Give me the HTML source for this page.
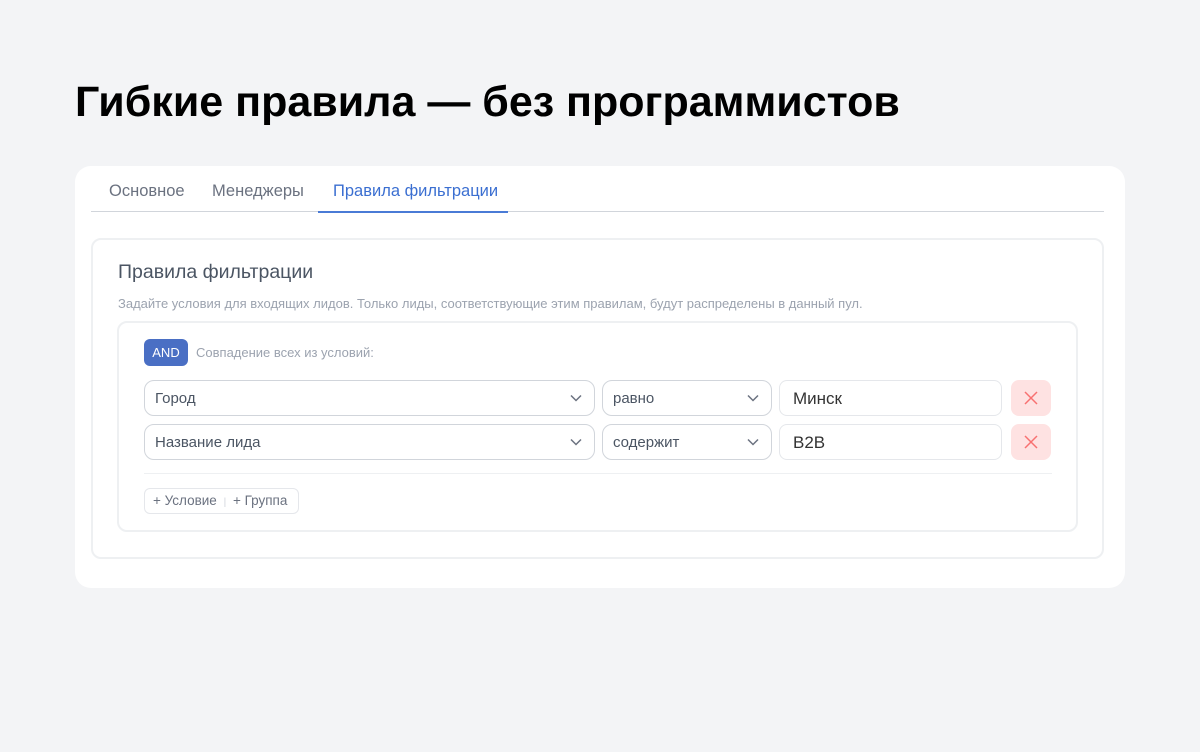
<!DOCTYPE html>
<html><head><meta charset="utf-8"><style>
*{box-sizing:border-box;margin:0;padding:0}
body{width:1200px;height:752px;background:#f3f4f6;font-family:"Liberation Sans",sans-serif;position:relative;overflow:hidden}
.abs{position:absolute}
h1{position:absolute;left:75px;top:78px;font-size:43px;font-weight:700;color:#000}
.card{left:75px;top:166px;width:1050px;height:422px;background:#fff;border-radius:16px}
.tab{top:182px;font-size:16.5px;color:#6b7280}
.sel{height:36px;border:1px solid #d1d5db;border-radius:10px;background:#fff;font-size:15px;color:#4b5563;padding:0 10px;line-height:36px}
.sel svg{position:absolute;right:12px;top:13px}
.inp{height:36px;border:1px solid #e5e7eb;border-radius:8px;background:#fff;font-size:17px;color:#333;padding:0 13px;line-height:35px}
.x{width:40px;height:36px;background:#fee2e2;border-radius:8px}
.x svg{position:absolute;left:13px;top:11px}
</style></head><body>
<h1>Гибкие правила — без программистов</h1>
<div class="abs card"></div>
<div class="abs tab" style="left:109px">Основное</div>
<div class="abs tab" style="left:212px">Менеджеры</div>
<div class="abs tab" style="left:333px;color:#3b6fd1">Правила фильтрации</div>
<div class="abs" style="left:91px;top:211px;width:1013px;height:1px;background:#d1d5db"></div>
<div class="abs" style="left:318px;top:211px;width:190px;height:2px;background:#4a7bd6"></div>
<div class="abs" style="left:91px;top:238px;width:1013px;height:321px;border:2px solid #eef0f2;border-radius:10px"></div>
<div class="abs" style="left:118px;top:261px;font-size:19.5px;color:#4b5563">Правила фильтрации</div>
<div class="abs" style="left:118px;top:296px;font-size:13px;color:#9ca3af">Задайте условия для входящих лидов. Только лиды, соответствующие этим правилам, будут распределены в данный пул.</div>
<div class="abs" style="left:117px;top:321px;width:961px;height:211px;border:2px solid #eef0f2;border-radius:10px"></div>
<div class="abs" style="left:144px;top:339px;width:44px;height:27px;background:#4a6fc4;border-radius:6px;color:#fff;font-size:13px;text-align:center;line-height:27px">AND</div>
<div class="abs" style="left:196px;top:345px;font-size:13px;color:#9ca3af">Совпадение всех из условий:</div>

<div class="abs sel" style="left:144px;top:380px;width:451px">Город<svg width="12" height="8" viewBox="0 0 12 8"><path d="M1 1.5l5 5 5-5" fill="none" stroke="#6b7280" stroke-width="1.5"/></svg></div>
<div class="abs sel" style="left:602px;top:380px;width:170px">равно<svg width="12" height="8" viewBox="0 0 12 8"><path d="M1 1.5l5 5 5-5" fill="none" stroke="#6b7280" stroke-width="1.5"/></svg></div>
<div class="abs inp" style="left:779px;top:380px;width:223px">Минск</div>
<div class="abs x" style="left:1011px;top:380px"><svg width="14" height="14" viewBox="0 0 14 14"><path d="M1 1l12 12M13 1L1 13" stroke="#f87171" stroke-width="1.5"/></svg></div>

<div class="abs sel" style="left:144px;top:424px;width:451px">Название лида<svg width="12" height="8" viewBox="0 0 12 8"><path d="M1 1.5l5 5 5-5" fill="none" stroke="#6b7280" stroke-width="1.5"/></svg></div>
<div class="abs sel" style="left:602px;top:424px;width:170px">содержит<svg width="12" height="8" viewBox="0 0 12 8"><path d="M1 1.5l5 5 5-5" fill="none" stroke="#6b7280" stroke-width="1.5"/></svg></div>
<div class="abs inp" style="left:779px;top:424px;width:223px">B2B</div>
<div class="abs x" style="left:1011px;top:424px"><svg width="14" height="14" viewBox="0 0 14 14"><path d="M1 1l12 12M13 1L1 13" stroke="#f87171" stroke-width="1.5"/></svg></div>

<div class="abs" style="left:144px;top:473px;width:908px;height:1px;background:#eef0f2"></div>
<div class="abs" style="left:144px;top:488px;width:155px;height:26px;border:1px solid #e5e7eb;border-radius:6px;font-size:13.5px;color:#6b7280;line-height:24px;padding-left:8px">+ Условие <span style="color:#d1d5db;font-size:10px;margin:0 3px">|</span> + Группа</div>
</body></html>
